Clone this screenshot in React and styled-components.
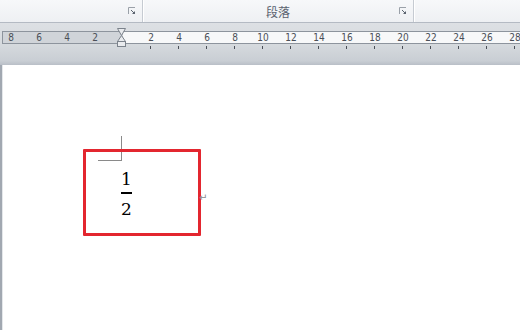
import React from "react";
import styled, { createGlobalStyle } from "styled-components";

const Global = createGlobalStyle`
  html, body { margin: 0; padding: 0; background: #fff; }
  body { width: 520px; height: 330px; overflow: hidden; font-family: "Liberation Sans", Arial, sans-serif; }
`;

const Frame = styled.div`
  width: 520px;
  height: 330px;
  display: flex;
  flex-direction: column;
  overflow: hidden;
`;

const RibbonRow = styled.div`
  height: 22px;
  display: flex;
  background: linear-gradient(#f7f8fa, #eef0f3);
  border-bottom: 1px solid #b4bac3;
  flex-shrink: 0;
`;

const Group = styled.div`
  width: ${(p) => p.$w}px;
  flex-shrink: 0;
  position: relative;
  display: flex;
  align-items: center;
  justify-content: center;
  border-right: ${(p) => (p.$sep ? "1px solid #c6cbd2" : "none")};
  box-shadow: ${(p) => (p.$sep ? "1px 0 0 #ffffff" : "none")};
  font-family: "Noto Sans CJK SC", "Noto Sans", sans-serif;
  font-size: 12px;
  color: #5a6270;
`;

const Launcher = styled.svg`
  position: absolute;
  right: 6px;
  top: 7px;
`;

const RulerBand = styled.div`
  height: 42px;
  flex-shrink: 0;
  background: linear-gradient(#dde0e4 0%, #d6dade 50%, #c9ced4 90%, #b9bfc7 100%);
  padding-top: 8px;
  box-sizing: border-box;
  position: relative;
`;

const RulerBar = styled.div`
  margin-left: 2px;
  height: 11px;
  border: 1px solid #8d949d;
  border-right: none;
  display: flex;
`;

const RulerSide = styled.div`
  display: flex;
  background: ${(p) => (p.$margin ? "#d0d4d9" : "#f7f8f9")};
  width: ${(p) => (p.$w ? `${p.$w}px` : "auto")};
  flex: ${(p) => (p.$w ? "none" : "1")};
  justify-content: ${(p) => (p.$margin ? "flex-end" : "flex-start")};
  padding: ${(p) => (p.$margin ? "0 14px 0 0" : "0 0 0 14px")};
  box-sizing: border-box;
`;

const Cell = styled.div`
  width: 28px;
  flex-shrink: 0;
  text-align: center;
  font-family: "DejaVu Sans Condensed", "DejaVu Sans", sans-serif;
  font-size: 10px;
  line-height: 11px;
  color: #4a4f57;
  position: relative;
`;

const Tick = styled.span`
  position: absolute;
  left: 13px;
  top: 14px;
  width: 1px;
  height: 3px;
  background: #4a4f57;
`;

const Marker = styled.svg`
  position: absolute;
  left: 116px;
  top: 5px;
`;

const Page = styled.div`
  flex: 1;
  background: #fff;
  border-left: 2px solid #a1a8b1;
  box-shadow: inset 1px 0 0 #e4e7ea;
  position: relative;
`;

const Corner = styled.div`
  position: absolute;
  left: 96px;
  top: 71px;
  width: 23px;
  height: 24px;
  border-right: 1px solid #8a8a8a;
  border-bottom: 1px solid #8a8a8a;
`;

const EquationBox = styled.div`
  position: absolute;
  left: 81px;
  top: 84px;
  border: 3px solid #e3262f;
  border-radius: 1px;
  display: flex;
  padding-left: 35px;
  padding-top: 18px;
  box-sizing: content-box;
  width: 77px;
  height: 63px;
`;

const Fraction = styled.div`
  display: inline-flex;
  flex-direction: column;
  align-items: center;
  font-family: "DejaVu Serif", "Liberation Serif", serif;
  font-size: 17px;
  color: #000;
  line-height: 18px;
`;

const Bar = styled.div`
  width: 11px;
  height: 2px;
  background: #000;
  margin: 4px 0 6px;
`;

const Pilcrow = styled.span`
  position: absolute;
  left: 197px;
  top: 127px;
  font-family: "DejaVu Sans", sans-serif;
  font-size: 10px;
  color: #8a8a8a;
`;

function LauncherIcon() {
  return (
    <Launcher width="8" height="8" viewBox="0 0 8 8">
      <path d="M0.5 7 V0.5 H7" stroke="#9aa0a8" fill="none" strokeWidth="1" />
      <path d="M3 3 L6.5 6.5" stroke="#5d6570" strokeWidth="1" />
      <path d="M7 4 V7 H4 Z" fill="#5d6570" />
    </Launcher>
  );
}

const left = [8, 6, 4, 2];
const right = [2, 4, 6, 8, 10, 12, 14, 16, 18, 20, 22, 24, 26, 28];

export default function App() {
  return (
    <>
      <Global />
      <Frame>
        <RibbonRow>
          <Group $w={142} $sep>
            <LauncherIcon />
          </Group>
          <Group $w={270} $sep>
            段落
            <LauncherIcon />
          </Group>
          <Group $w={108} />
        </RibbonRow>
        <RulerBand>
          <RulerBar>
            <RulerSide $margin $w={120}>
              {left.map((n) => (
                <Cell key={n}>{n}</Cell>
              ))}
            </RulerSide>
            <RulerSide>
              {right.map((n) => (
                <Cell key={n}>
                  {n}
                  <Tick />
                </Cell>
              ))}
            </RulerSide>
          </RulerBar>
          <Marker width="11" height="20" viewBox="0 0 11 20">
            <path d="M1.5 0.5 H9.5 L5.5 7.5 Z" fill="#e9ebee" stroke="#7b828b" />
            <path d="M5.5 7.5 L9.5 13.5 H1.5 Z" fill="#e9ebee" stroke="#7b828b" />
            <rect x="1.5" y="13.5" width="8" height="5" fill="#e9ebee" stroke="#7b828b" />
          </Marker>
        </RulerBand>
        <Page>
          <Corner />
          <EquationBox>
            <Fraction>
              <span>1</span>
              <Bar />
              <span>2</span>
            </Fraction>
          </EquationBox>
          <Pilcrow>↵</Pilcrow>
        </Page>
      </Frame>
    </>
  );
}
